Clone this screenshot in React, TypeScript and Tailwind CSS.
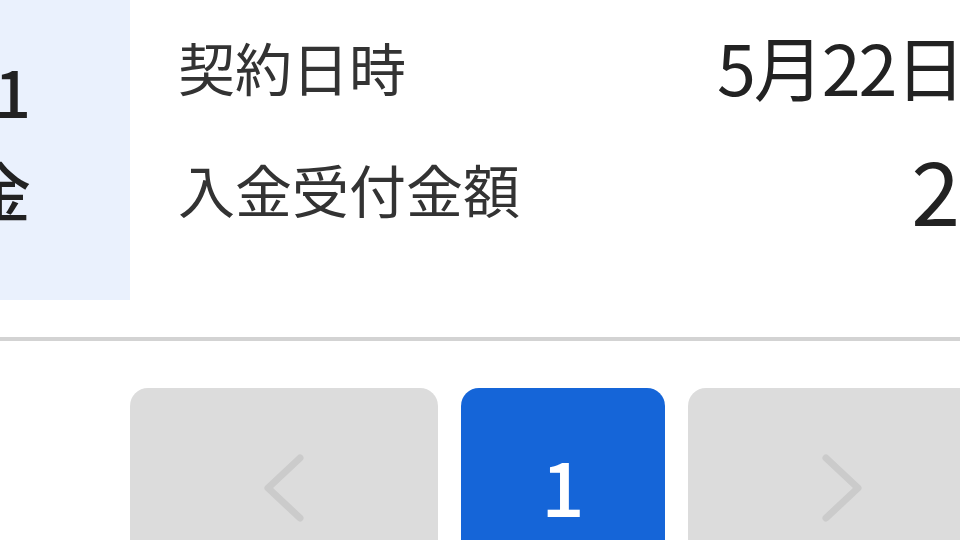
const font = { fontFamily: '"Noto Sans CJK JP", "Noto Sans", sans-serif' };

function Chevron({ dir }: { dir: 'left' | 'right' }) {
  const points = dir === 'left' ? '36,4 4,34 36,64' : '4,4 36,34 4,64';
  return (
    <svg width="40" height="68" viewBox="0 0 40 68" fill="none">
      <polyline points={points} stroke="#cbcbcb" strokeWidth="7" strokeLinecap="round" strokeLinejoin="round" />
    </svg>
  );
}

function InfoRow({ label, value, valueClass }: { label: string; value: string; valueClass: string }) {
  return (
    <div className="flex h-[122px] items-center justify-between">
      <span className="text-[57px] leading-none text-[#333333]">{label}</span>
      <span className={valueClass}>{value}</span>
    </div>
  );
}

export default function App() {
  return (
    <div className="w-[960px] h-[540px] overflow-hidden bg-white" style={font}>
      <div className="flex w-[1142px] h-[300px]">
        <div className="w-[130px] shrink-0 overflow-hidden bg-[#eaf1fd]">
          <div className="-ml-[200px] w-[231px] pt-[41px] text-right text-[64px] font-medium leading-[98px] text-[#222222]">
            <div>第1</div>
            <div>入金</div>
          </div>
        </div>
        <div className="flex-1 pl-[48px] pt-[5px]">
          <InfoRow
            label="契約日時"
            value="5月22日 10:00"
            valueClass="text-[70px] leading-none tracking-[-2px] text-[#222222] whitespace-nowrap"
          />
          <InfoRow
            label="入金受付金額"
            value="20,000"
            valueClass="-mr-[38px] text-[88px] leading-none text-[#222222] whitespace-nowrap"
          />
        </div>
      </div>

      <div className="mt-[37px] h-[4px] bg-[#d3d3d3]" />

      <div className="flex gap-[23px] pl-[130px] pt-[47px]">
        <button className="flex h-[200px] w-[308px] shrink-0 items-center justify-center rounded-[18px] bg-[#dcdcdc]">
          <Chevron dir="left" />
        </button>
        <button className="flex h-[200px] w-[204px] shrink-0 items-center justify-center rounded-[18px] bg-[#1565d8] pb-[8px] text-[76px] font-medium leading-none text-white">
          1
        </button>
        <button className="flex h-[200px] w-[308px] shrink-0 items-center justify-center rounded-[18px] bg-[#dcdcdc]">
          <Chevron dir="right" />
        </button>
      </div>
    </div>
  );
}
